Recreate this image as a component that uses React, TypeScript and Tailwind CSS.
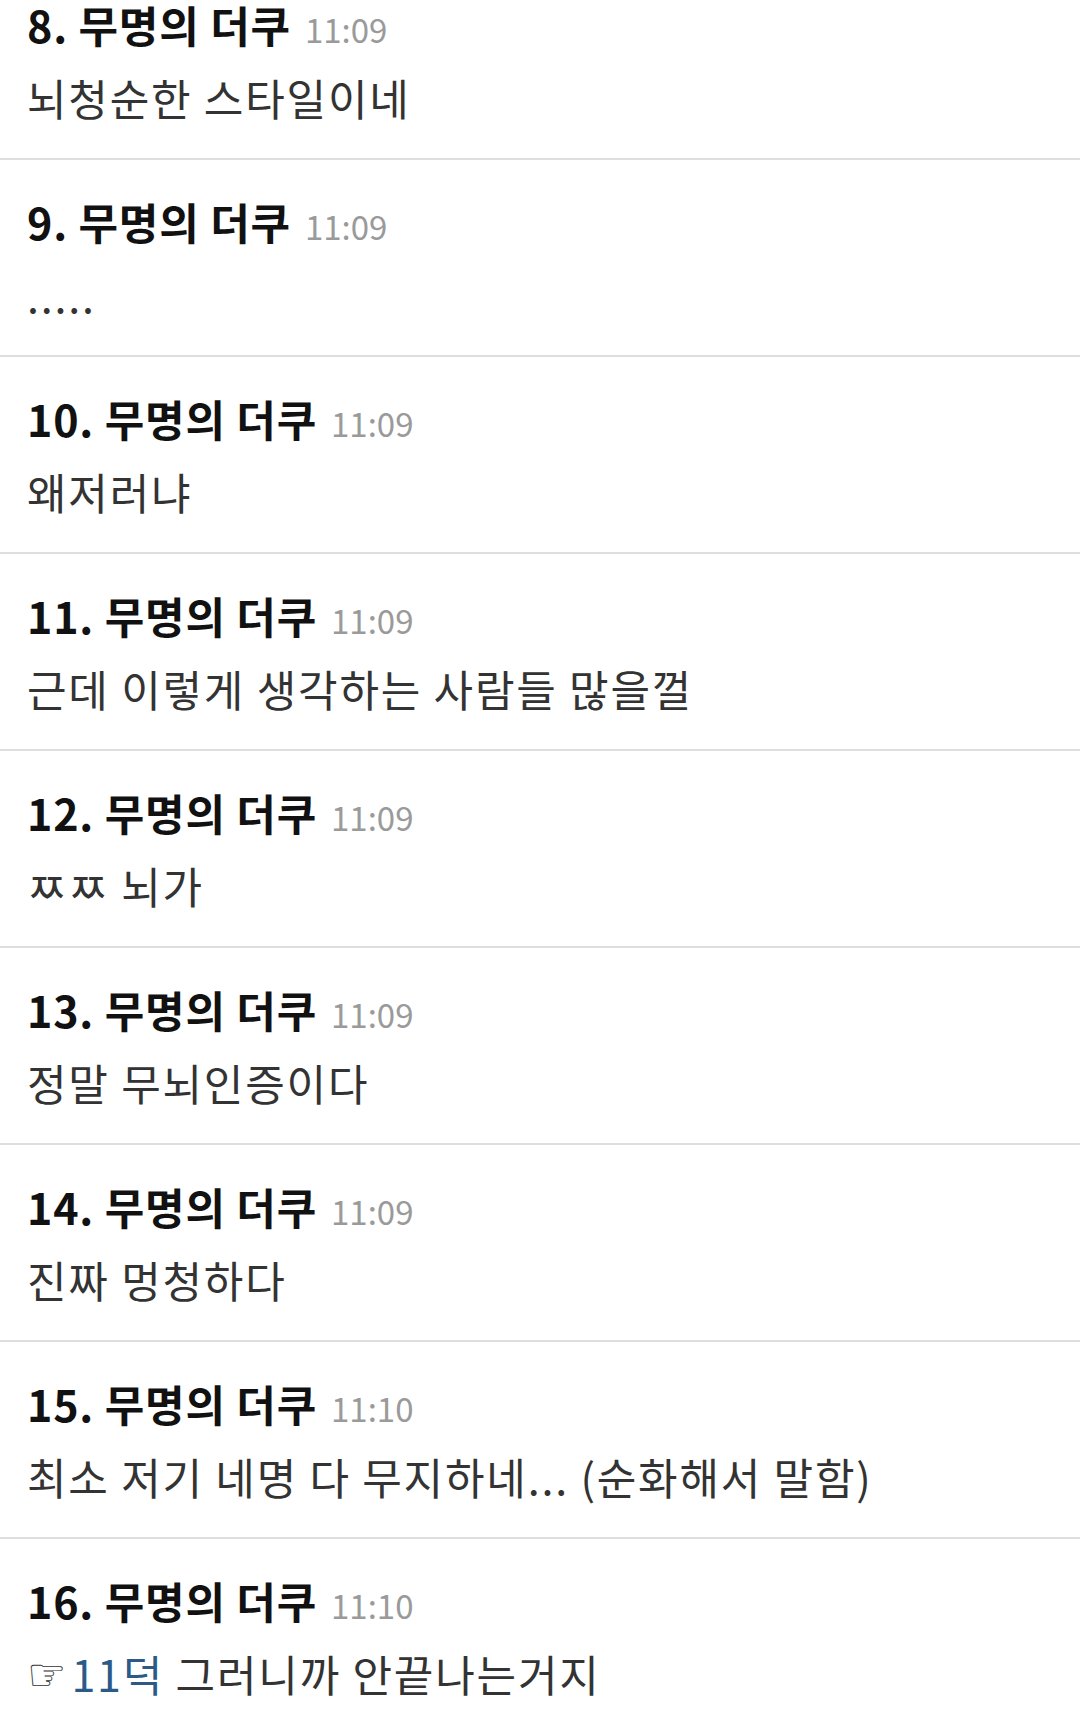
import React from "react";

interface Comment {
  no: number;
  time: string;
  body: React.ReactNode;
}

const comments: Comment[] = [
  { no: 8, time: "11:09", body: "뇌청순한 스타일이네" },
  { no: 9, time: "11:09", body: "....." },
  { no: 10, time: "11:09", body: "왜저러냐" },
  { no: 11, time: "11:09", body: "근데 이렇게 생각하는 사람들 많을껄" },
  { no: 12, time: "11:09", body: "ㅉㅉ 뇌가" },
  { no: 13, time: "11:09", body: "정말 무뇌인증이다" },
  { no: 14, time: "11:09", body: "진짜 멍청하다" },
  { no: 15, time: "11:10", body: "최소 저기 네명 다 무지하네... (순화해서 말함)" },
  {
    no: 16,
    time: "11:10",
    body: (
      <>
        <span className="mr-[5px] text-[44px] tracking-normal align-[2px] font-['DejaVu_Sans'] text-[#333]">☞</span>
        <span className="text-[#2b5a88]">11덕</span> 그러니까 안끝나는거지
      </>
    ),
  },
];

const CommentRow: React.FC<{ c: Comment; last: boolean }> = ({ c, last }) => (
  <div className={`px-[27px] pt-[35px] pb-[19px] ${last ? "" : "border-b-2 border-[#dedede]"}`}>
    <div className="flex items-baseline h-[52px] text-[43px] leading-[52px]">
      <span className="font-bold text-[#111] tracking-[0.8px]">
        {c.no}. 무명의 더쿠
      </span>
      <span className="ml-[14px] text-[33px] leading-[52px] text-[#9a9a9a]">{c.time}</span>
    </div>
    <div className="mt-[5px] h-[84px] text-[43px] leading-[84px] tracking-[1.8px] text-[#333] whitespace-nowrap">
      {c.body}
    </div>
  </div>
);

export default function App() {
  return (
    <div className="w-[1080px] h-[1733px] overflow-hidden bg-white font-['Noto_Sans_CJK_KR','Noto_Sans',sans-serif]">
      <div className="-mt-[37px]">
        {comments.map((c, i) => (
          <CommentRow key={c.no} c={c} last={i === comments.length - 1} />
        ))}
      </div>
    </div>
  );
}
